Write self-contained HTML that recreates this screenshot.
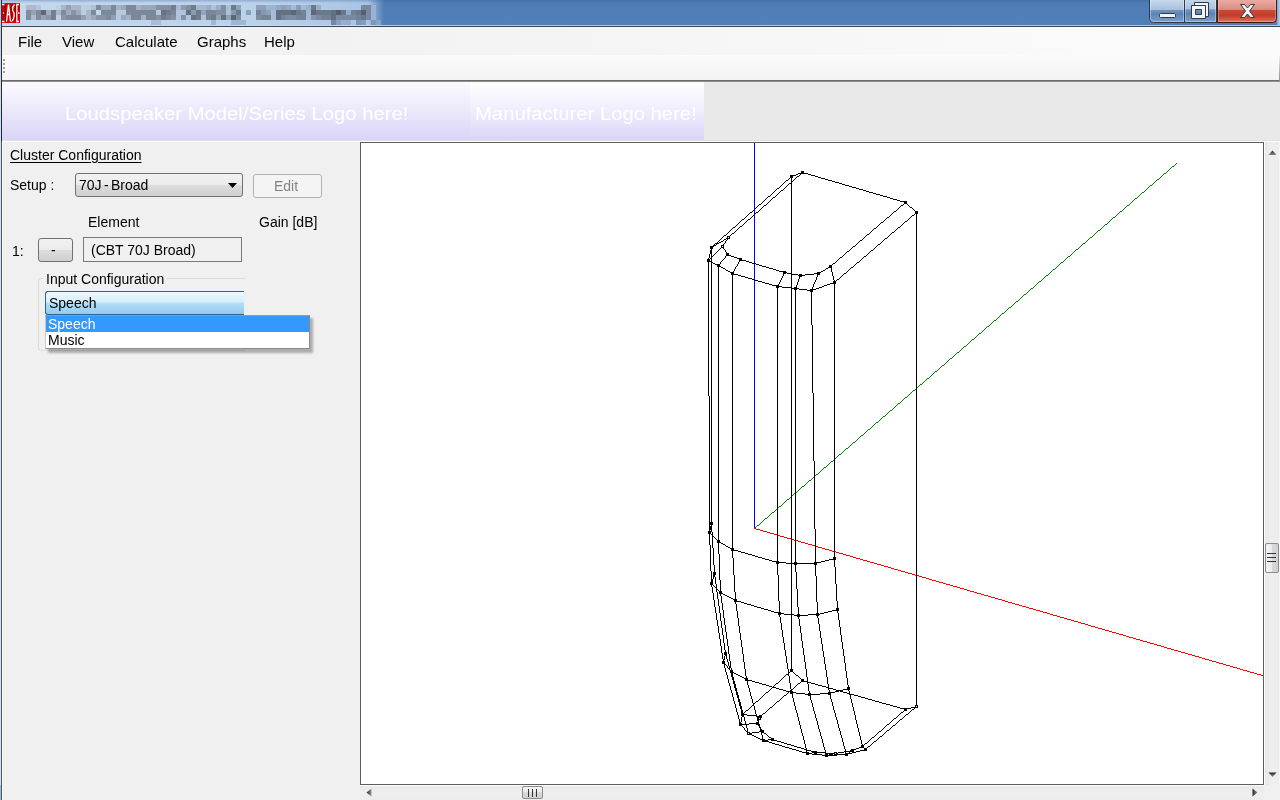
<!DOCTYPE html>
<html><head><meta charset="utf-8">
<style>
*{margin:0;padding:0;box-sizing:border-box}
html,body{width:1280px;height:800px;overflow:hidden;background:#f0f0f0;font-family:"Liberation Sans",sans-serif;position:relative}
.abs{position:absolute}
#title{left:0;top:0;width:1280px;height:26px;background:linear-gradient(#4b79b2,#507eb6 40%,#5080b8 90%)}
#glow{left:0;top:0;width:400px;height:26px;background:linear-gradient(to right,#c4d8ee 0,#bcd2ea 250px,#a9c4e3 368px,rgba(80,126,182,0) 384px)}
#tops{left:0;top:0;width:1280px;height:3px;background:linear-gradient(rgba(60,100,160,.35),rgba(60,100,160,0))}
#tbot{left:0;top:25px;width:1280px;height:1px;background:rgba(205,222,242,.75)}
#tline{left:0;top:26px;width:1280px;height:1px;background:#3a4a5e}
#blocks i{position:absolute;width:5px;height:5px;display:block}
#icon{left:2px;top:3px;width:18px;height:20px;background:#d80f0f;overflow:hidden}
#icon span{position:absolute;left:0;top:1px;width:18px;font-family:"Liberation Sans",sans-serif;font-size:17px;line-height:17px;color:#fff;transform:scaleX(.55);transform-origin:0 0;white-space:nowrap;letter-spacing:-0.5px}
#lborder{left:1px;top:0;width:1px;height:800px;background:linear-gradient(#2a3646 0,#1e2632 140px,#4a5868 142px,#4a5868 100%)}
#lborder0{left:0;top:0;width:1px;height:800px;background:linear-gradient(#c4c0cc 0,#cddff2 120px,#cddff2 785px,#a4bad2 785px)}
#lhl{left:2px;top:141px;width:1px;height:659px;background:#f8f8f8}
#btns{left:1149px;top:0;width:128px;height:22px;border:1px solid #3b4a5e;border-top:none;border-radius:0 0 5px 5px;overflow:hidden}
#bmin{left:0;top:0;width:35px;height:21px;background:linear-gradient(#c3d5ea 0,#b6cbe3 45%,#7b9dc6 50%,#5d86ba 75%,#7ba0cc 100%);border-right:1px solid #3b4a5e}
#bmax{left:35px;top:0;width:32px;height:21px;background:linear-gradient(#c3d5ea 0,#b6cbe3 45%,#7b9dc6 50%,#5d86ba 75%,#7ba0cc 100%);border-right:1px solid #5a2020}
#bcls{left:67px;top:0;width:61px;height:21px;background:linear-gradient(#eaaaa0 0,#e3968b 45%,#cc5443 50%,#c43d2b 75%,#d77263 100%)}
#menubar{left:2px;top:27px;width:1278px;height:28px;background:linear-gradient(to right,#f0f0f0 0,#f3f3f3 450px,#f8f8f8 900px,#fbfbfb 1278px)}
.menu{position:absolute;top:33px;font-size:15px;color:#000;line-height:18px;will-change:transform}
#toolbar{left:2px;top:55px;width:1278px;height:25px;background:linear-gradient(#fbfbfb,#f3f3f3)}
.grip{position:absolute;left:3px;width:2px;height:2px;background:#a0a0a0}
#tbline{left:2px;top:80px;width:1278px;height:2px;background:linear-gradient(#5a5a5a,#a0a0a0)}
#banner{left:2px;top:82px;width:702px;height:58px;background:linear-gradient(to right,rgba(0,0,0,0) 468px,#dad5f8 468px),linear-gradient(#fbfaff 0,#ebe8fb 50%,#d9d4f8 100%)}
#banner2{left:470px;top:82px;width:234px;height:58px;background:linear-gradient(#ffffff 0,#efedfc 50%,#dad5f8 100%)}
#rest{left:704px;top:82px;width:576px;height:59px;background:#e9e9e9}
#vline{left:360px;top:141px;width:920px;height:1px;background:#fafafa}
.btext{position:absolute;color:#fff;font-size:18px;line-height:20px;top:104px;transform:scaleX(1.125);transform-origin:0 0;white-space:nowrap;font-family:"Liberation Sans",sans-serif}
#vp{left:360px;top:142px;width:904px;height:643px;background:#fff;border:1px solid #5e5e5e}
.lbl{position:absolute;font-size:14px;color:#000;line-height:16px;white-space:nowrap;will-change:transform}

.combo{position:absolute;border:1px solid #707070;border-radius:3px;background:linear-gradient(#f2f2f2 0,#ebebeb 48%,#dddddd 52%,#cfcfcf 100%)}
.btn{position:absolute;border:1px solid #707070;border-radius:3px;background:linear-gradient(#f2f2f2 0,#ebebeb 48%,#dddddd 52%,#cfcfcf 100%)}
.tbox{position:absolute;border:1px solid #7a7a7a;background:#f0f0f0}
.sb{position:absolute;background:#ececec}
</style></head><body>
<div id="title" class="abs"></div>
<div id="glow" class="abs"></div>
<div id="tops" class="abs"></div>
<div id="tbot" class="abs"></div>
<div id="blocks" class="abs" style="left:0;top:0"><i style="left:26px;top:5px;background:rgb(173, 186, 203)"></i><i style="left:31px;top:5px;background:rgb(172, 186, 203)"></i><i style="left:36px;top:5px;background:rgb(183, 196, 214)"></i><i style="left:56px;top:5px;background:rgb(191, 206, 225)"></i><i style="left:61px;top:5px;background:rgb(169, 183, 201)"></i><i style="left:66px;top:5px;background:rgb(148, 161, 178)"></i><i style="left:71px;top:5px;background:rgb(168, 183, 201)"></i><i style="left:76px;top:5px;background:rgb(168, 182, 201)"></i><i style="left:81px;top:5px;background:rgb(189, 204, 223)"></i><i style="left:86px;top:5px;background:rgb(188, 204, 223)"></i><i style="left:91px;top:5px;background:rgb(176, 192, 212)"></i><i style="left:96px;top:5px;background:rgb(125, 138, 154)"></i><i style="left:101px;top:5px;background:rgb(155, 170, 189)"></i><i style="left:106px;top:5px;background:rgb(155, 170, 188)"></i><i style="left:111px;top:5px;background:rgb(124, 137, 154)"></i><i style="left:116px;top:5px;background:rgb(164, 180, 200)"></i><i style="left:121px;top:5px;background:rgb(154, 168, 188)"></i><i style="left:126px;top:5px;background:rgb(124, 137, 153)"></i><i style="left:131px;top:5px;background:rgb(123, 136, 153)"></i><i style="left:136px;top:5px;background:rgb(163, 178, 199)"></i><i style="left:141px;top:5px;background:rgb(152, 167, 188)"></i><i style="left:146px;top:5px;background:rgb(151, 167, 188)"></i><i style="left:151px;top:5px;background:rgb(151, 167, 187)"></i><i style="left:156px;top:5px;background:rgb(132, 146, 164)"></i><i style="left:161px;top:5px;background:rgb(131, 146, 164)"></i><i style="left:166px;top:5px;background:rgb(131, 145, 164)"></i><i style="left:171px;top:5px;background:rgb(112, 125, 142)"></i><i style="left:176px;top:5px;background:rgb(167, 186, 209)"></i><i style="left:181px;top:5px;background:rgb(140, 155, 175)"></i><i style="left:186px;top:5px;background:rgb(130, 144, 164)"></i><i style="left:191px;top:5px;background:rgb(111, 124, 141)"></i><i style="left:196px;top:5px;background:rgb(166, 184, 208)"></i><i style="left:201px;top:5px;background:rgb(165, 184, 208)"></i><i style="left:206px;top:5px;background:rgb(155, 174, 197)"></i><i style="left:211px;top:5px;background:rgb(173, 193, 219)"></i><i style="left:216px;top:5px;background:rgb(155, 173, 196)"></i><i style="left:221px;top:5px;background:rgb(128, 143, 163)"></i><i style="left:226px;top:5px;background:rgb(171, 192, 218)"></i><i style="left:231px;top:5px;background:rgb(110, 123, 141)"></i><i style="left:236px;top:5px;background:rgb(144, 162, 184)"></i><i style="left:256px;top:5px;background:rgb(143, 161, 184)"></i><i style="left:261px;top:5px;background:rgb(142, 161, 184)"></i><i style="left:266px;top:5px;background:rgb(158, 179, 205)"></i><i style="left:271px;top:5px;background:rgb(158, 179, 205)"></i><i style="left:276px;top:5px;background:rgb(149, 169, 195)"></i><i style="left:281px;top:5px;background:rgb(140, 160, 183)"></i><i style="left:286px;top:5px;background:rgb(148, 168, 194)"></i><i style="left:291px;top:5px;background:rgb(163, 187, 215)"></i><i style="left:296px;top:5px;background:rgb(139, 158, 183)"></i><i style="left:301px;top:5px;background:rgb(162, 186, 214)"></i><i style="left:306px;top:5px;background:rgb(154, 176, 204)"></i><i style="left:311px;top:5px;background:rgb(107, 121, 140)"></i><i style="left:316px;top:5px;background:rgb(153, 175, 204)"></i><i style="left:361px;top:5px;background:rgb(119, 137, 160)"></i><i style="left:366px;top:5px;background:rgb(119, 137, 160)"></i><i style="left:371px;top:5px;background:rgb(154, 179, 212)"></i><i style="left:26px;top:10px;background:rgb(128, 140, 155)"></i><i style="left:31px;top:10px;background:rgb(150, 163, 179)"></i><i style="left:36px;top:10px;background:rgb(128, 139, 155)"></i><i style="left:41px;top:10px;background:rgb(95, 105, 120)"></i><i style="left:46px;top:10px;background:rgb(160, 173, 190)"></i><i style="left:51px;top:10px;background:rgb(116, 128, 143)"></i><i style="left:56px;top:10px;background:rgb(170, 183, 202)"></i><i style="left:61px;top:10px;background:rgb(127, 139, 155)"></i><i style="left:66px;top:10px;background:rgb(158, 172, 189)"></i><i style="left:71px;top:10px;background:rgb(137, 149, 166)"></i><i style="left:76px;top:10px;background:rgb(157, 171, 189)"></i><i style="left:81px;top:10px;background:rgb(189, 204, 223)"></i><i style="left:86px;top:10px;background:rgb(167, 182, 200)"></i><i style="left:91px;top:10px;background:rgb(125, 138, 154)"></i><i style="left:101px;top:10px;background:rgb(125, 137, 154)"></i><i style="left:106px;top:10px;background:rgb(124, 137, 154)"></i><i style="left:111px;top:10px;background:rgb(124, 137, 154)"></i><i style="left:116px;top:10px;background:rgb(184, 201, 223)"></i><i style="left:121px;top:10px;background:rgb(184, 200, 223)"></i><i style="left:126px;top:10px;background:rgb(124, 137, 153)"></i><i style="left:131px;top:10px;background:rgb(123, 136, 153)"></i><i style="left:136px;top:10px;background:rgb(123, 136, 153)"></i><i style="left:141px;top:10px;background:rgb(123, 136, 153)"></i><i style="left:146px;top:10px;background:rgb(123, 136, 153)"></i><i style="left:151px;top:10px;background:rgb(123, 136, 153)"></i><i style="left:156px;top:10px;background:rgb(179, 198, 221)"></i><i style="left:161px;top:10px;background:rgb(103, 115, 131)"></i><i style="left:166px;top:10px;background:rgb(112, 125, 142)"></i><i style="left:171px;top:10px;background:rgb(121, 135, 153)"></i><i style="left:176px;top:10px;background:rgb(177, 196, 220)"></i><i style="left:181px;top:10px;background:rgb(177, 196, 220)"></i><i style="left:186px;top:10px;background:rgb(102, 114, 130)"></i><i style="left:191px;top:10px;background:rgb(139, 155, 175)"></i><i style="left:196px;top:10px;background:rgb(111, 124, 141)"></i><i style="left:201px;top:10px;background:rgb(147, 164, 186)"></i><i style="left:206px;top:10px;background:rgb(120, 134, 152)"></i><i style="left:211px;top:10px;background:rgb(120, 134, 152)"></i><i style="left:216px;top:10px;background:rgb(128, 144, 163)"></i><i style="left:221px;top:10px;background:rgb(128, 143, 163)"></i><i style="left:226px;top:10px;background:rgb(171, 192, 218)"></i><i style="left:231px;top:10px;background:rgb(136, 152, 174)"></i><i style="left:236px;top:10px;background:rgb(110, 123, 141)"></i><i style="left:246px;top:10px;background:rgb(143, 161, 184)"></i><i style="left:256px;top:10px;background:rgb(117, 132, 151)"></i><i style="left:261px;top:10px;background:rgb(134, 151, 173)"></i><i style="left:266px;top:10px;background:rgb(141, 160, 184)"></i><i style="left:271px;top:10px;background:rgb(166, 189, 216)"></i><i style="left:276px;top:10px;background:rgb(100, 113, 130)"></i><i style="left:281px;top:10px;background:rgb(100, 113, 129)"></i><i style="left:286px;top:10px;background:rgb(100, 113, 129)"></i><i style="left:291px;top:10px;background:rgb(92, 103, 119)"></i><i style="left:296px;top:10px;background:rgb(108, 122, 140)"></i><i style="left:301px;top:10px;background:rgb(115, 131, 151)"></i><i style="left:306px;top:10px;background:rgb(161, 185, 214)"></i><i style="left:311px;top:10px;background:rgb(92, 103, 119)"></i><i style="left:316px;top:10px;background:rgb(107, 121, 140)"></i><i style="left:321px;top:10px;background:rgb(107, 121, 140)"></i><i style="left:326px;top:10px;background:rgb(107, 121, 140)"></i><i style="left:331px;top:10px;background:rgb(99, 112, 129)"></i><i style="left:336px;top:10px;background:rgb(84, 94, 108)"></i><i style="left:341px;top:10px;background:rgb(106, 120, 140)"></i><i style="left:346px;top:10px;background:rgb(149, 173, 202)"></i><i style="left:351px;top:10px;background:rgb(113, 129, 150)"></i><i style="left:356px;top:10px;background:rgb(106, 120, 139)"></i><i style="left:361px;top:10px;background:rgb(84, 94, 108)"></i><i style="left:366px;top:10px;background:rgb(119, 137, 160)"></i><i style="left:371px;top:10px;background:rgb(154, 179, 212)"></i><i style="left:26px;top:15px;background:rgb(128, 140, 155)"></i><i style="left:31px;top:15px;background:rgb(172, 186, 203)"></i><i style="left:36px;top:15px;background:rgb(128, 139, 155)"></i><i style="left:41px;top:15px;background:rgb(149, 162, 178)"></i><i style="left:46px;top:15px;background:rgb(138, 150, 167)"></i><i style="left:51px;top:15px;background:rgb(116, 128, 143)"></i><i style="left:56px;top:15px;background:rgb(191, 206, 225)"></i><i style="left:61px;top:15px;background:rgb(137, 150, 166)"></i><i style="left:66px;top:15px;background:rgb(127, 138, 155)"></i><i style="left:71px;top:15px;background:rgb(126, 138, 155)"></i><i style="left:76px;top:15px;background:rgb(126, 138, 155)"></i><i style="left:81px;top:15px;background:rgb(147, 160, 177)"></i><i style="left:86px;top:15px;background:rgb(167, 182, 200)"></i><i style="left:91px;top:15px;background:rgb(156, 170, 189)"></i><i style="left:96px;top:15px;background:rgb(135, 149, 166)"></i><i style="left:101px;top:15px;background:rgb(135, 148, 166)"></i><i style="left:106px;top:15px;background:rgb(124, 137, 154)"></i><i style="left:111px;top:15px;background:rgb(145, 158, 177)"></i><i style="left:116px;top:15px;background:rgb(184, 201, 223)"></i><i style="left:121px;top:15px;background:rgb(154, 168, 188)"></i><i style="left:126px;top:15px;background:rgb(163, 179, 199)"></i><i style="left:131px;top:15px;background:rgb(123, 136, 153)"></i><i style="left:136px;top:15px;background:rgb(123, 136, 153)"></i><i style="left:141px;top:15px;background:rgb(162, 178, 199)"></i><i style="left:146px;top:15px;background:rgb(123, 136, 153)"></i><i style="left:151px;top:15px;background:rgb(123, 136, 153)"></i><i style="left:156px;top:15px;background:rgb(132, 146, 164)"></i><i style="left:161px;top:15px;background:rgb(112, 125, 142)"></i><i style="left:166px;top:15px;background:rgb(122, 135, 153)"></i><i style="left:171px;top:15px;background:rgb(131, 145, 164)"></i><i style="left:176px;top:15px;background:rgb(177, 196, 220)"></i><i style="left:181px;top:15px;background:rgb(130, 145, 164)"></i><i style="left:186px;top:15px;background:rgb(176, 195, 220)"></i><i style="left:191px;top:15px;background:rgb(102, 114, 130)"></i><i style="left:196px;top:15px;background:rgb(111, 124, 141)"></i><i style="left:201px;top:15px;background:rgb(174, 194, 219)"></i><i style="left:206px;top:15px;background:rgb(120, 134, 152)"></i><i style="left:211px;top:15px;background:rgb(111, 124, 141)"></i><i style="left:216px;top:15px;background:rgb(146, 163, 185)"></i><i style="left:221px;top:15px;background:rgb(101, 114, 130)"></i><i style="left:226px;top:15px;background:rgb(145, 163, 185)"></i><i style="left:231px;top:15px;background:rgb(93, 104, 119)"></i><i style="left:236px;top:15px;background:rgb(127, 143, 163)"></i><i style="left:256px;top:15px;background:rgb(126, 142, 162)"></i><i style="left:261px;top:15px;background:rgb(117, 132, 151)"></i><i style="left:266px;top:15px;background:rgb(117, 132, 151)"></i><i style="left:271px;top:15px;background:rgb(166, 189, 216)"></i><i style="left:276px;top:15px;background:rgb(100, 113, 130)"></i><i style="left:281px;top:15px;background:rgb(116, 131, 151)"></i><i style="left:286px;top:15px;background:rgb(124, 140, 162)"></i><i style="left:291px;top:15px;background:rgb(124, 140, 162)"></i><i style="left:296px;top:15px;background:rgb(116, 131, 151)"></i><i style="left:301px;top:15px;background:rgb(115, 131, 151)"></i><i style="left:306px;top:15px;background:rgb(161, 185, 214)"></i><i style="left:311px;top:15px;background:rgb(130, 149, 172)"></i><i style="left:316px;top:15px;background:rgb(122, 139, 161)"></i><i style="left:321px;top:15px;background:rgb(114, 130, 151)"></i><i style="left:326px;top:15px;background:rgb(114, 130, 150)"></i><i style="left:331px;top:15px;background:rgb(99, 112, 129)"></i><i style="left:336px;top:15px;background:rgb(121, 139, 161)"></i><i style="left:341px;top:15px;background:rgb(121, 138, 161)"></i><i style="left:346px;top:15px;background:rgb(120, 138, 160)"></i><i style="left:351px;top:15px;background:rgb(120, 138, 160)"></i><i style="left:356px;top:15px;background:rgb(113, 129, 150)"></i><i style="left:361px;top:15px;background:rgb(105, 120, 139)"></i><i style="left:366px;top:15px;background:rgb(119, 137, 160)"></i><i style="left:371px;top:15px;background:rgb(154, 179, 212)"></i><i style="left:151px;top:20px;background:rgb(168, 189, 216)"></i><i style="left:156px;top:20px;background:rgb(167, 189, 216)"></i><i style="left:211px;top:20px;background:rgb(161, 184, 214)"></i><i style="left:231px;top:20px;background:rgb(159, 183, 213)"></i><i style="left:236px;top:20px;background:rgb(159, 182, 213)"></i><i style="left:241px;top:20px;background:rgb(159, 182, 213)"></i><i style="left:331px;top:20px;background:rgb(117, 135, 159)"></i><i style="left:336px;top:20px;background:rgb(136, 159, 189)"></i><i style="left:341px;top:20px;background:rgb(149, 175, 210)"></i><i style="left:346px;top:20px;background:rgb(148, 175, 209)"></i><i style="left:356px;top:20px;background:rgb(128, 150, 179)"></i><i style="left:361px;top:20px;background:rgb(133, 158, 189)"></i><i style="left:371px;top:20px;background:rgb(127, 149, 178)"></i><i style="left:376px;top:20px;background:rgb(139, 164, 198)"></i></div>
<svg class="abs" style="left:2px;top:3px" width="18" height="20" viewBox="0 0 18 20"><rect width="18" height="20" fill="#d40000"/>
<g fill="none" stroke="#fff" stroke-width="1.3">
<path d="M0 1.5H2.5M0 18.5H2.5"/><path d="M1 10h1" stroke-width="1.5"/>
<path d="M4.5 18.5L6.5 1.5L8.5 18.5M5.3 11.5H7.7"/>
<path d="M12.5 1.5Q10 4 10.5 7Q12.5 10 12.2 13Q11.5 17 9.5 18.5"/>
<path d="M17 1.5H14.8V18.5H17M16 10h1.5"/>
</g><g stroke="#300" stroke-width="0.8" opacity=".6" fill="none"><path d="M3.2 2V18M9.3 3V18M13.6 3V17"/></g></svg>
<svg class="abs" style="left:1149px;top:0" width="129" height="24">
<defs>
<linearGradient id="bb" x1="0" y1="0" x2="0" y2="1"><stop offset="0" stop-color="#c6d8ec"/><stop offset=".42" stop-color="#a9c2df"/><stop offset=".46" stop-color="#6f95c2"/><stop offset=".62" stop-color="#5984b8"/><stop offset="1" stop-color="#7ea2cd"/></linearGradient>
<linearGradient id="br" x1="0" y1="0" x2="0" y2="1"><stop offset="0" stop-color="#eaaaa2"/><stop offset=".42" stop-color="#dc8c80"/><stop offset=".46" stop-color="#c84a36"/><stop offset=".7" stop-color="#c43c28"/><stop offset="1" stop-color="#d97a68"/></linearGradient>
</defs>
<path d="M0.5 0V18.5Q0.5 22.5 4.5 22.5H35.5V0Z" fill="url(#bb)"/><path d="M0.5 0V18.5Q0.5 22.5 4.5 22.5H35.5V0" fill="none" stroke="#2c3a4c"/>
<path d="M1.5 0V18.5Q1.5 21.5 4.5 21.5H34.5V0" fill="none" stroke="rgba(255,255,255,.35)"/>
<rect x="35.5" y="-1" width="32" height="23.5" fill="url(#bb)" stroke="#2c3a4c"/>
<path d="M36.5 0V21.5H66.5V0" fill="none" stroke="rgba(255,255,255,.35)"/>
<path d="M68.5 0V22.5H123.5Q127.5 22.5 127.5 18.5V0Z" fill="url(#br)"/><path d="M68.5 0V22.5H123.5Q127.5 22.5 127.5 18.5V0" fill="none" stroke="#4a1408"/>
<path d="M69.5 0V21.5H123.5Q126.5 21.5 126.5 18.5V0" fill="none" stroke="rgba(255,220,210,.35)"/>
<rect x="10.5" y="13.5" width="16" height="4" rx="1" fill="#f4f4f4" stroke="#2e3a4e"/>
<path d="M45.5 2.5H59.5V16.5H56.5V5.5H45.5Z" fill="#f4f4f4" stroke="#2e3a4e" stroke-linejoin="round"/>
<path d="M42.5 5.5H56.5V18.5H42.5ZM46.5 9.5V14.5H52.5V9.5Z" fill="#f4f4f4" stroke="#2e3a4e" fill-rule="evenodd"/>
<path d="M91.5 4.5H95.5L98.5 8L101.5 4.5H105.5L100.5 11L105.5 17.5H101.5L98.5 14L95.5 17.5H91.5L96.5 11Z" fill="#f6f6f6" stroke="#2e3a4e" stroke-linejoin="round"/>
</svg>
</div>
<div class="abs" style="left:1277px;top:0;width:3px;height:25px;background:linear-gradient(to right,#7ea6d6,#b4d0ee)"></div><div id="tline" class="abs"></div>
<div id="menubar" class="abs"></div>
<div class="menu" style="left:18px">File</div>
<div class="menu" style="left:62px">View</div>
<div class="menu" style="left:115px">Calculate</div>
<div class="menu" style="left:197px">Graphs</div>
<div class="menu" style="left:264px">Help</div>
<div id="toolbar" class="abs"></div>
<div class="grip" style="top:59px"></div><div class="grip" style="top:63px"></div><div class="grip" style="top:67px"></div><div class="grip" style="top:71px"></div>
<div id="tbline" class="abs"></div><div class="abs" style="left:1279px;top:56px;width:1px;height:25px;background:linear-gradient(#f0f0f0,#8a8a8a)"></div>
<div id="banner" class="abs"></div><div id="banner2" class="abs"></div>
<div id="rest" class="abs"></div>
<div class="btext" style="left:65px">Loudspeaker Model/Series Logo here!</div>
<div class="btext" style="left:475px">Manufacturer Logo here!</div>
<div class="abs" style="left:2px;top:140px;width:1278px;height:1px;background:#e2e2e2"></div><div class="abs" style="left:2px;top:141px;width:1278px;height:1px;background:#fdfdfd"></div>
<div id="vp" class="abs"></div>
<div class="lbl" style="left:10px;top:147px;text-decoration:underline;text-underline-offset:2px">Cluster Configuration</div>
<div class="lbl" style="left:10px;top:177px">Setup :</div>
<div class="lbl" style="left:88px;top:214px">Element</div>
<div class="lbl" style="left:259px;top:214px">Gain [dB]</div>
<div class="lbl" style="left:12px;top:243px">1:</div>

<div class="combo" style="left:75px;top:173px;width:168px;height:24px"></div>
<div class="lbl" style="left:79px;top:177px;word-spacing:-1.5px">70J - Broad</div>
<svg class="abs" style="left:228px;top:183px" width="10" height="6"><path d="M0 0H9L4.5 5Z" fill="#000"/></svg>
<div class="btn" style="left:253px;top:174px;width:69px;height:24px;border-color:#adb2b5;background:#f4f4f4"></div>
<div class="lbl" style="left:274px;top:178px;color:#838383">Edit</div>
<div class="btn" style="left:38px;top:238px;width:35px;height:24px"></div>
<div class="lbl" style="left:51px;top:242px">-</div>
<div class="tbox" style="left:83px;top:237px;width:159px;height:25px"></div>
<div class="lbl" style="left:91px;top:242px">(CBT 70J Broad)</div>
<div class="abs" style="left:38px;top:278px;width:207px;height:73px;border:1px solid #dcdcdc;border-right:none;border-radius:3px 0 0 3px"></div>
<div class="abs" style="left:43px;top:272px;width:124px;height:14px;background:#f0f0f0"></div>
<div class="lbl" style="left:46px;top:271px">Input Configuration</div>
<div class="abs" style="left:45px;top:291px;width:199px;height:24px;border:1px solid #2c6494;border-right:none;border-radius:3px 0 0 3px;background:linear-gradient(#eef8fe 0,#d6eefb 45%,#b2def6 52%,#94cbec 100%)"></div>
<div class="lbl" style="left:49px;top:295px">Speech</div>
<div class="abs" style="left:48px;top:318px;width:265px;height:35px;background:rgba(0,0,0,.28);filter:blur(1.2px)"></div>
<div class="abs" style="left:45px;top:315px;width:265px;height:34px;background:#fff;border:1px solid #8a8a8a;border-left-color:#c8c8c8;border-top-color:#9a9a9a"></div>
<div class="abs" style="left:46px;top:316px;width:263px;height:16px;background:#3399ff"></div>
<div class="lbl" style="left:48px;top:316px;color:#fff">Speech</div>
<div class="lbl" style="left:48px;top:332px">Music</div>

<div class="sb" style="left:1264px;top:142px;width:16px;height:643px;background:linear-gradient(to right,#fdfdfd 0,#fdfdfd 1px,#e8e8e8 1px,#efefef 8px,#ececec 15px,#f6f6f6 15px)"></div>
<svg class="abs" style="left:1268px;top:150px" width="9" height="6"><defs><linearGradient id="ga" x1="0" y1="0" x2="0" y2="1"><stop offset="0" stop-color="#222"/><stop offset="1" stop-color="#888"/></linearGradient></defs><path d="M4.5 0.5L8.5 5H0.5Z" fill="url(#ga)"/></svg>
<svg class="abs" style="left:1268px;top:772px" width="9" height="6"><defs><linearGradient id="gb" x1="0" y1="0" x2="0" y2="1"><stop offset="0" stop-color="#222"/><stop offset="1" stop-color="#999"/></linearGradient></defs><path d="M0.5 0.5H8.5L4.5 5Z" fill="url(#gb)"/></svg>
<div class="abs" style="left:1265px;top:543px;width:14px;height:30px;border:1px solid #8b8b8b;border-radius:2px;background:linear-gradient(to right,#f4f4f4 0,#eaeaea 50%,#d9d9db 50%,#cfd0d3 100%)"></div>
<div class="abs" style="left:1267px;top:553px;width:9px;height:1px;background:#333"></div>
<div class="abs" style="left:1267px;top:557px;width:9px;height:1px;background:#333"></div>
<div class="abs" style="left:1267px;top:561px;width:9px;height:1px;background:#333"></div>
<div class="sb" style="left:360px;top:785px;width:904px;height:15px;background:linear-gradient(#fdfdfd 0,#fdfdfd 1px,#e9e9e9 1px,#efefef 8px,#ececec 14px)"></div>
<div class="sb" style="left:1264px;top:785px;width:16px;height:15px;background:#f0f0f0"></div>
<svg class="abs" style="left:366px;top:788px" width="7" height="10"><defs><linearGradient id="gc" x1="0" y1="0" x2="1" y2="0"><stop offset="0" stop-color="#222"/><stop offset="1" stop-color="#999"/></linearGradient></defs><path d="M0.5 4.5L5.5 0.5V8.5Z" fill="url(#gc)"/></svg>
<svg class="abs" style="left:1252px;top:788px" width="7" height="10"><defs><linearGradient id="gd" x1="0" y1="0" x2="1" y2="0"><stop offset="0" stop-color="#222"/><stop offset="1" stop-color="#999"/></linearGradient></defs><path d="M0.5 0.5L5.5 4.5L0.5 8.5Z" fill="url(#gd)"/></svg>
<div class="abs" style="left:522px;top:786px;width:21px;height:13px;border:1px solid #8b8b8b;border-radius:2px;background:linear-gradient(#f4f4f4 0,#eaeaea 50%,#d9d9db 50%,#cfd0d3 100%)"></div>
<div class="abs" style="left:528px;top:789px;width:1px;height:8px;background:#333"></div>
<div class="abs" style="left:532px;top:789px;width:1px;height:8px;background:#333"></div>
<div class="abs" style="left:536px;top:789px;width:1px;height:8px;background:#333"></div>
<svg class="abs" style="left:0;top:0" width="1280" height="800" shape-rendering="crispEdges"><path d="M754 143h1v386h-1z" fill="#0000ff"/><path d="M1172 166h2v1h-2zM1164 173h2v1h-2zM1157 179h2v1h-2zM1150 185h2v1h-2zM1142 192h2v1h-2zM1135 198h2v1h-2zM1127 205h2v1h-2zM1120 211h2v1h-2zM1113 217h2v1h-2zM1105 224h2v1h-2zM1098 230h2v1h-2zM1090 237h2v1h-2zM1083 243h2v1h-2zM1076 249h2v1h-2zM1068 256h2v1h-2zM1061 262h2v1h-2zM1053 269h2v1h-2zM1046 275h2v1h-2zM1039 281h2v1h-2zM1031 288h2v1h-2zM1024 294h2v1h-2zM1016 301h2v1h-2zM1009 307h2v1h-2zM1002 313h2v1h-2zM994 320h2v1h-2zM987 326h2v1h-2zM979 333h2v1h-2zM972 339h2v1h-2zM964 346h2v1h-2zM957 352h2v1h-2zM950 358h2v1h-2zM942 365h2v1h-2zM935 371h2v1h-2zM927 378h2v1h-2zM920 384h2v1h-2zM913 390h2v1h-2zM905 397h2v1h-2zM898 403h2v1h-2zM890 410h2v1h-2zM883 416h2v1h-2zM876 422h2v1h-2zM868 429h2v1h-2zM861 435h2v1h-2zM853 442h2v1h-2zM846 448h2v1h-2zM839 454h2v1h-2zM831 461h2v1h-2zM824 467h2v1h-2zM816 474h2v1h-2zM809 480h2v1h-2zM802 486h2v1h-2zM794 493h2v1h-2zM787 499h2v1h-2zM779 506h2v1h-2zM772 512h2v1h-2zM765 518h2v1h-2zM757 525h2v1h-2zM1176 163h1v1h-1zM1175 164h1v1h-1zM1174 165h1v1h-1zM1171 167h1v1h-1zM1170 168h1v1h-1zM1169 169h1v1h-1zM1168 170h1v1h-1zM1167 171h1v1h-1zM1166 172h1v1h-1zM1163 174h1v1h-1zM1162 175h1v1h-1zM1161 176h1v1h-1zM1160 177h1v1h-1zM1159 178h1v1h-1zM1156 180h1v1h-1zM1155 181h1v1h-1zM1154 182h1v1h-1zM1153 183h1v1h-1zM1152 184h1v1h-1zM1149 186h1v1h-1zM1148 187h1v1h-1zM1147 188h1v1h-1zM1146 189h1v1h-1zM1145 190h1v1h-1zM1144 191h1v1h-1zM1141 193h1v1h-1zM1140 194h1v1h-1zM1139 195h1v1h-1zM1138 196h1v1h-1zM1137 197h1v1h-1zM1134 199h1v1h-1zM1133 200h1v1h-1zM1132 201h1v1h-1zM1131 202h1v1h-1zM1130 203h1v1h-1zM1129 204h1v1h-1zM1126 206h1v1h-1zM1125 207h1v1h-1zM1124 208h1v1h-1zM1123 209h1v1h-1zM1122 210h1v1h-1zM1119 212h1v1h-1zM1118 213h1v1h-1zM1117 214h1v1h-1zM1116 215h1v1h-1zM1115 216h1v1h-1zM1112 218h1v1h-1zM1111 219h1v1h-1zM1110 220h1v1h-1zM1109 221h1v1h-1zM1108 222h1v1h-1zM1107 223h1v1h-1zM1104 225h1v1h-1zM1103 226h1v1h-1zM1102 227h1v1h-1zM1101 228h1v1h-1zM1100 229h1v1h-1zM1097 231h1v1h-1zM1096 232h1v1h-1zM1095 233h1v1h-1zM1094 234h1v1h-1zM1093 235h1v1h-1zM1092 236h1v1h-1zM1089 238h1v1h-1zM1088 239h1v1h-1zM1087 240h1v1h-1zM1086 241h1v1h-1zM1085 242h1v1h-1zM1082 244h1v1h-1zM1081 245h1v1h-1zM1080 246h1v1h-1zM1079 247h1v1h-1zM1078 248h1v1h-1zM1075 250h1v1h-1zM1074 251h1v1h-1zM1073 252h1v1h-1zM1072 253h1v1h-1zM1071 254h1v1h-1zM1070 255h1v1h-1zM1067 257h1v1h-1zM1066 258h1v1h-1zM1065 259h1v1h-1zM1064 260h1v1h-1zM1063 261h1v1h-1zM1060 263h1v1h-1zM1059 264h1v1h-1zM1058 265h1v1h-1zM1057 266h1v1h-1zM1056 267h1v1h-1zM1055 268h1v1h-1zM1052 270h1v1h-1zM1051 271h1v1h-1zM1050 272h1v1h-1zM1049 273h1v1h-1zM1048 274h1v1h-1zM1045 276h1v1h-1zM1044 277h1v1h-1zM1043 278h1v1h-1zM1042 279h1v1h-1zM1041 280h1v1h-1zM1038 282h1v1h-1zM1037 283h1v1h-1zM1036 284h1v1h-1zM1035 285h1v1h-1zM1034 286h1v1h-1zM1033 287h1v1h-1zM1030 289h1v1h-1zM1029 290h1v1h-1zM1028 291h1v1h-1zM1027 292h1v1h-1zM1026 293h1v1h-1zM1023 295h1v1h-1zM1022 296h1v1h-1zM1021 297h1v1h-1zM1020 298h1v1h-1zM1019 299h1v1h-1zM1018 300h1v1h-1zM1015 302h1v1h-1zM1014 303h1v1h-1zM1013 304h1v1h-1zM1012 305h1v1h-1zM1011 306h1v1h-1zM1008 308h1v1h-1zM1007 309h1v1h-1zM1006 310h1v1h-1zM1005 311h1v1h-1zM1004 312h1v1h-1zM1001 314h1v1h-1zM1000 315h1v1h-1zM999 316h1v1h-1zM998 317h1v1h-1zM997 318h1v1h-1zM996 319h1v1h-1zM993 321h1v1h-1zM992 322h1v1h-1zM991 323h1v1h-1zM990 324h1v1h-1zM989 325h1v1h-1zM986 327h1v1h-1zM985 328h1v1h-1zM984 329h1v1h-1zM983 330h1v1h-1zM982 331h1v1h-1zM981 332h1v1h-1zM978 334h1v1h-1zM977 335h1v1h-1zM976 336h1v1h-1zM975 337h1v1h-1zM974 338h1v1h-1zM971 340h1v1h-1zM970 341h1v1h-1zM969 342h1v1h-1zM968 343h1v1h-1zM967 344h1v1h-1zM966 345h1v1h-1zM963 347h1v1h-1zM962 348h1v1h-1zM961 349h1v1h-1zM960 350h1v1h-1zM959 351h1v1h-1zM956 353h1v1h-1zM955 354h1v1h-1zM954 355h1v1h-1zM953 356h1v1h-1zM952 357h1v1h-1zM949 359h1v1h-1zM948 360h1v1h-1zM947 361h1v1h-1zM946 362h1v1h-1zM945 363h1v1h-1zM944 364h1v1h-1zM941 366h1v1h-1zM940 367h1v1h-1zM939 368h1v1h-1zM938 369h1v1h-1zM937 370h1v1h-1zM934 372h1v1h-1zM933 373h1v1h-1zM932 374h1v1h-1zM931 375h1v1h-1zM930 376h1v1h-1zM929 377h1v1h-1zM926 379h1v1h-1zM925 380h1v1h-1zM924 381h1v1h-1zM923 382h1v1h-1zM922 383h1v1h-1zM919 385h1v1h-1zM918 386h1v1h-1zM917 387h1v1h-1zM916 388h1v1h-1zM915 389h1v1h-1zM912 391h1v1h-1zM911 392h1v1h-1zM910 393h1v1h-1zM909 394h1v1h-1zM908 395h1v1h-1zM907 396h1v1h-1zM904 398h1v1h-1zM903 399h1v1h-1zM902 400h1v1h-1zM901 401h1v1h-1zM900 402h1v1h-1zM897 404h1v1h-1zM896 405h1v1h-1zM895 406h1v1h-1zM894 407h1v1h-1zM893 408h1v1h-1zM892 409h1v1h-1zM889 411h1v1h-1zM888 412h1v1h-1zM887 413h1v1h-1zM886 414h1v1h-1zM885 415h1v1h-1zM882 417h1v1h-1zM881 418h1v1h-1zM880 419h1v1h-1zM879 420h1v1h-1zM878 421h1v1h-1zM875 423h1v1h-1zM874 424h1v1h-1zM873 425h1v1h-1zM872 426h1v1h-1zM871 427h1v1h-1zM870 428h1v1h-1zM867 430h1v1h-1zM866 431h1v1h-1zM865 432h1v1h-1zM864 433h1v1h-1zM863 434h1v1h-1zM860 436h1v1h-1zM859 437h1v1h-1zM858 438h1v1h-1zM857 439h1v1h-1zM856 440h1v1h-1zM855 441h1v1h-1zM852 443h1v1h-1zM851 444h1v1h-1zM850 445h1v1h-1zM849 446h1v1h-1zM848 447h1v1h-1zM845 449h1v1h-1zM844 450h1v1h-1zM843 451h1v1h-1zM842 452h1v1h-1zM841 453h1v1h-1zM838 455h1v1h-1zM837 456h1v1h-1zM836 457h1v1h-1zM835 458h1v1h-1zM834 459h1v1h-1zM833 460h1v1h-1zM830 462h1v1h-1zM829 463h1v1h-1zM828 464h1v1h-1zM827 465h1v1h-1zM826 466h1v1h-1zM823 468h1v1h-1zM822 469h1v1h-1zM821 470h1v1h-1zM820 471h1v1h-1zM819 472h1v1h-1zM818 473h1v1h-1zM815 475h1v1h-1zM814 476h1v1h-1zM813 477h1v1h-1zM812 478h1v1h-1zM811 479h1v1h-1zM808 481h1v1h-1zM807 482h1v1h-1zM806 483h1v1h-1zM805 484h1v1h-1zM804 485h1v1h-1zM801 487h1v1h-1zM800 488h1v1h-1zM799 489h1v1h-1zM798 490h1v1h-1zM797 491h1v1h-1zM796 492h1v1h-1zM793 494h1v1h-1zM792 495h1v1h-1zM791 496h1v1h-1zM790 497h1v1h-1zM789 498h1v1h-1zM786 500h1v1h-1zM785 501h1v1h-1zM784 502h1v1h-1zM783 503h1v1h-1zM782 504h1v1h-1zM781 505h1v1h-1zM778 507h1v1h-1zM777 508h1v1h-1zM776 509h1v1h-1zM775 510h1v1h-1zM774 511h1v1h-1zM771 513h1v1h-1zM770 514h1v1h-1zM769 515h1v1h-1zM768 516h1v1h-1zM767 517h1v1h-1zM764 519h1v1h-1zM763 520h1v1h-1zM762 521h1v1h-1zM761 522h1v1h-1zM760 523h1v1h-1zM759 524h1v1h-1zM756 526h1v1h-1zM755 527h1v1h-1zM754 528h1v1h-1z" fill="#008000"/><path d="M754 528h2v1h-2zM756 529h4v1h-4zM760 530h3v1h-3zM763 531h4v1h-4zM767 532h3v1h-3zM770 533h4v1h-4zM774 534h3v1h-3zM777 535h3v1h-3zM780 536h4v1h-4zM784 537h3v1h-3zM787 538h4v1h-4zM791 539h3v1h-3zM794 540h4v1h-4zM798 541h3v1h-3zM801 542h4v1h-4zM805 543h3v1h-3zM808 544h4v1h-4zM812 545h3v1h-3zM815 546h3v1h-3zM818 547h4v1h-4zM822 548h3v1h-3zM825 549h4v1h-4zM829 550h3v1h-3zM832 551h4v1h-4zM836 552h3v1h-3zM839 553h4v1h-4zM843 554h3v1h-3zM846 555h4v1h-4zM850 556h3v1h-3zM853 557h3v1h-3zM856 558h4v1h-4zM860 559h3v1h-3zM863 560h4v1h-4zM867 561h3v1h-3zM870 562h4v1h-4zM874 563h3v1h-3zM877 564h4v1h-4zM881 565h3v1h-3zM884 566h4v1h-4zM888 567h3v1h-3zM891 568h3v1h-3zM894 569h4v1h-4zM898 570h3v1h-3zM901 571h4v1h-4zM905 572h3v1h-3zM908 573h4v1h-4zM912 574h3v1h-3zM915 575h4v1h-4zM919 576h3v1h-3zM922 577h4v1h-4zM926 578h3v1h-3zM929 579h3v1h-3zM932 580h4v1h-4zM936 581h3v1h-3zM939 582h4v1h-4zM943 583h3v1h-3zM946 584h4v1h-4zM950 585h3v1h-3zM953 586h4v1h-4zM957 587h3v1h-3zM960 588h4v1h-4zM964 589h3v1h-3zM967 590h3v1h-3zM970 591h4v1h-4zM974 592h3v1h-3zM977 593h4v1h-4zM981 594h3v1h-3zM984 595h4v1h-4zM988 596h3v1h-3zM991 597h4v1h-4zM995 598h3v1h-3zM998 599h4v1h-4zM1002 600h3v1h-3zM1005 601h3v1h-3zM1008 602h4v1h-4zM1012 603h3v1h-3zM1015 604h4v1h-4zM1019 605h3v1h-3zM1022 606h4v1h-4zM1026 607h3v1h-3zM1029 608h4v1h-4zM1033 609h3v1h-3zM1036 610h4v1h-4zM1040 611h3v1h-3zM1043 612h4v1h-4zM1047 613h3v1h-3zM1050 614h3v1h-3zM1053 615h4v1h-4zM1057 616h3v1h-3zM1060 617h4v1h-4zM1064 618h3v1h-3zM1067 619h4v1h-4zM1071 620h3v1h-3zM1074 621h4v1h-4zM1078 622h3v1h-3zM1081 623h4v1h-4zM1085 624h3v1h-3zM1088 625h3v1h-3zM1091 626h4v1h-4zM1095 627h3v1h-3zM1098 628h4v1h-4zM1102 629h3v1h-3zM1105 630h4v1h-4zM1109 631h3v1h-3zM1112 632h4v1h-4zM1116 633h3v1h-3zM1119 634h4v1h-4zM1123 635h3v1h-3zM1126 636h3v1h-3zM1129 637h4v1h-4zM1133 638h3v1h-3zM1136 639h4v1h-4zM1140 640h3v1h-3zM1143 641h4v1h-4zM1147 642h3v1h-3zM1150 643h4v1h-4zM1154 644h3v1h-3zM1157 645h4v1h-4zM1161 646h3v1h-3zM1164 647h3v1h-3zM1167 648h4v1h-4zM1171 649h3v1h-3zM1174 650h4v1h-4zM1178 651h3v1h-3zM1181 652h4v1h-4zM1185 653h3v1h-3zM1188 654h4v1h-4zM1192 655h3v1h-3zM1195 656h4v1h-4zM1199 657h3v1h-3zM1202 658h3v1h-3zM1205 659h4v1h-4zM1209 660h3v1h-3zM1212 661h4v1h-4zM1216 662h3v1h-3zM1219 663h4v1h-4zM1223 664h3v1h-3zM1226 665h4v1h-4zM1230 666h3v1h-3zM1233 667h4v1h-4zM1237 668h3v1h-3zM1240 669h3v1h-3zM1243 670h4v1h-4zM1247 671h3v1h-3zM1250 672h4v1h-4zM1254 673h3v1h-3zM1257 674h4v1h-4zM1261 675h2v1h-2z" fill="#ff0000"/><path fill="#000" d="M801 172h3v1h-3zM798 173h4v1h-4zM804 173h4v1h-4zM796 174h2v1h-2zM808 174h3v1h-3zM793 175h3v1h-3zM811 175h4v1h-4zM791 176h2v1h-2zM797 176h2v1h-2zM815 176h3v1h-3zM790 177h2v1h-2zM818 177h3v1h-3zM821 178h4v1h-4zM825 179h3v1h-3zM786 180h2v1h-2zM828 180h4v1h-4zM791 181h2v1h-2zM832 181h3v1h-3zM835 182h4v1h-4zM789 183h3v1h-3zM839 183h3v1h-3zM842 184h3v1h-3zM845 185h4v1h-4zM849 186h3v1h-3zM852 187h4v1h-4zM777 188h2v1h-2zM856 188h3v1h-3zM859 189h4v1h-4zM781 190h2v1h-2zM863 190h3v1h-3zM866 191h3v1h-3zM869 192h4v1h-4zM873 193h3v1h-3zM876 194h4v1h-4zM880 195h3v1h-3zM768 196h2v1h-2zM883 196h4v1h-4zM773 197h2v1h-2zM887 197h3v1h-3zM890 198h3v1h-3zM893 199h4v1h-4zM897 200h3v1h-3zM900 201h4v1h-4zM904 202h2v1h-2zM759 204h2v1h-2zM764 205h2v1h-2zM901 205h2v1h-2zM910 207h2v1h-2zM894 211h2v1h-2zM750 212h2v1h-2zM756 212h2v1h-2zM915 213h2v1h-2zM912 215h2v1h-2zM887 217h2v1h-2zM742 219h2v1h-2zM748 219h2v1h-2zM905 221h2v1h-2zM881 222h2v1h-2zM740 226h2v1h-2zM733 227h2v1h-2zM898 227h2v1h-2zM874 228h2v1h-2zM892 232h2v1h-2zM732 233h2v1h-2zM867 234h2v1h-2zM724 235h2v1h-2zM726 238h2v1h-2zM885 238h2v1h-2zM724 239h2v1h-2zM860 240h2v1h-2zM721 241h2v1h-2zM719 242h2v1h-2zM715 243h4v1h-4zM878 244h2v1h-2zM713 245h3v1h-3zM712 246h2v1h-2zM853 246h2v1h-2zM710 250h2v1h-2zM871 250h2v1h-2zM710 251h2v1h-2zM847 251h2v1h-2zM710 252h2v1h-2zM710 253h2v1h-2zM727 254h2v1h-2zM729 255h2v1h-2zM711 256h2v1h-2zM731 256h3v1h-3zM864 256h2v1h-2zM734 257h3v1h-3zM840 257h2v1h-2zM710 258h2v1h-2zM737 258h2v1h-2zM708 259h2v1h-2zM739 259h3v1h-3zM742 260h4v1h-4zM708 261h4v1h-4zM746 261h3v1h-3zM711 262h2v1h-2zM749 262h3v1h-3zM857 262h2v1h-2zM713 263h2v1h-2zM752 263h4v1h-4zM833 263h2v1h-2zM715 264h2v1h-2zM756 264h3v1h-3zM717 265h2v1h-2zM759 265h3v1h-3zM718 266h3v1h-3zM762 266h4v1h-4zM721 267h2v1h-2zM766 267h3v1h-3zM828 267h3v1h-3zM851 267h2v1h-2zM723 268h2v1h-2zM769 268h4v1h-4zM826 268h2v1h-2zM773 269h3v1h-3zM726 270h2v1h-2zM776 270h3v1h-3zM823 270h2v1h-2zM728 271h2v1h-2zM779 271h4v1h-4zM821 271h2v1h-2zM730 272h2v1h-2zM783 272h4v1h-4zM819 272h2v1h-2zM732 273h2v1h-2zM787 273h5v1h-5zM814 273h5v1h-5zM844 273h2v1h-2zM734 274h4v1h-4zM791 274h7v1h-7zM805 274h9v1h-9zM738 275h3v1h-3zM798 275h7v1h-7zM741 276h4v1h-4zM745 277h3v1h-3zM748 278h4v1h-4zM752 279h3v1h-3zM837 279h2v1h-2zM755 280h3v1h-3zM758 281h4v1h-4zM834 281h2v1h-2zM762 282h3v1h-3zM833 282h2v1h-2zM765 283h4v1h-4zM830 283h3v1h-3zM769 284h3v1h-3zM827 284h3v1h-3zM772 285h4v1h-4zM824 285h3v1h-3zM776 286h6v1h-6zM822 286h2v1h-2zM782 287h10v1h-10zM819 287h3v1h-3zM791 288h8v1h-8zM816 288h3v1h-3zM799 289h8v1h-8zM813 289h3v1h-3zM807 290h6v1h-6zM709 526h3v1h-3zM709 527h3v1h-3zM709 528h3v1h-3zM709 529h3v1h-3zM709 533h2v1h-2zM711 534h2v1h-2zM712 536h2v1h-2zM717 540h2v1h-2zM718 542h3v1h-3zM721 543h2v1h-2zM723 544h2v1h-2zM726 546h2v1h-2zM728 547h2v1h-2zM730 548h3v1h-3zM732 549h2v1h-2zM734 550h4v1h-4zM738 551h3v1h-3zM741 552h4v1h-4zM745 553h3v1h-3zM748 554h4v1h-4zM752 555h3v1h-3zM755 556h3v1h-3zM758 557h4v1h-4zM762 558h3v1h-3zM833 558h2v1h-2zM765 559h4v1h-4zM829 559h4v1h-4zM769 560h3v1h-3zM825 560h4v1h-4zM772 561h4v1h-4zM821 561h4v1h-4zM776 562h10v1h-10zM817 562h4v1h-4zM786 563h31v1h-31zM713 575h2v1h-2zM713 576h2v1h-2zM711 579h2v1h-2zM711 580h2v1h-2zM711 581h2v1h-2zM711 584h2v1h-2zM715 587h2v1h-2zM716 589h2v1h-2zM719 591h2v1h-2zM720 593h3v1h-3zM723 594h2v1h-2zM725 595h2v1h-2zM727 596h2v1h-2zM729 597h2v1h-2zM731 598h2v1h-2zM733 599h3v1h-3zM735 600h2v1h-2zM737 601h4v1h-4zM741 602h3v1h-3zM744 603h3v1h-3zM747 604h4v1h-4zM751 605h3v1h-3zM754 606h3v1h-3zM757 607h4v1h-4zM761 608h3v1h-3zM764 609h4v1h-4zM836 609h2v1h-2zM768 610h3v1h-3zM832 610h4v1h-4zM771 611h3v1h-3zM828 611h4v1h-4zM774 612h4v1h-4zM824 612h4v1h-4zM778 613h6v1h-6zM820 613h4v1h-4zM784 614h10v1h-10zM808 614h12v1h-12zM794 615h14v1h-14zM725 655h2v1h-2zM723 659h2v1h-2zM723 663h2v1h-2zM724 664h2v1h-2zM729 666h2v1h-2zM729 667h2v1h-2zM728 668h2v1h-2zM730 670h2v1h-2zM730 671h2v1h-2zM730 672h4v1h-4zM788 672h2v1h-2zM731 673h2v1h-2zM734 673h2v1h-2zM731 674h2v1h-2zM736 674h2v1h-2zM786 674h3v1h-3zM731 675h2v1h-2zM738 675h2v1h-2zM796 675h2v1h-2zM731 676h2v1h-2zM740 676h2v1h-2zM732 677h2v1h-2zM742 677h2v1h-2zM732 678h2v1h-2zM744 678h3v1h-3zM732 679h2v1h-2zM746 679h2v1h-2zM748 680h4v1h-4zM802 680h2v1h-2zM733 681h2v1h-2zM752 681h3v1h-3zM804 681h4v1h-4zM733 682h2v1h-2zM755 682h4v1h-4zM807 682h4v1h-4zM733 683h2v1h-2zM759 683h3v1h-3zM776 683h2v1h-2zM798 683h2v1h-2zM811 683h4v1h-4zM734 684h2v1h-2zM762 684h4v1h-4zM815 684h3v1h-3zM734 685h2v1h-2zM766 685h3v1h-3zM818 685h4v1h-4zM734 686h2v1h-2zM769 686h3v1h-3zM822 686h4v1h-4zM734 687h2v1h-2zM772 687h4v1h-4zM826 687h3v1h-3zM735 688h2v1h-2zM776 688h3v1h-3zM828 688h5v1h-5zM847 688h2v1h-2zM735 689h2v1h-2zM779 689h4v1h-4zM791 689h2v1h-2zM833 689h3v1h-3zM843 689h4v1h-4zM735 690h2v1h-2zM783 690h3v1h-3zM790 690h2v1h-2zM836 690h7v1h-7zM786 691h4v1h-4zM835 691h4v1h-4zM840 691h3v1h-3zM736 692h2v1h-2zM766 692h2v1h-2zM790 692h6v1h-6zM831 692h4v1h-4zM843 692h4v1h-4zM736 693h2v1h-2zM796 693h9v1h-9zM820 693h11v1h-11zM847 693h3v1h-3zM736 694h2v1h-2zM805 694h15v1h-15zM849 694h5v1h-5zM737 695h2v1h-2zM784 695h2v1h-2zM854 695h4v1h-4zM737 696h2v1h-2zM858 696h3v1h-3zM737 697h2v1h-2zM861 697h4v1h-4zM865 698h3v1h-3zM738 699h2v1h-2zM868 699h4v1h-4zM738 700h2v1h-2zM872 700h3v1h-3zM738 701h2v1h-2zM756 701h2v1h-2zM777 701h2v1h-2zM875 701h4v1h-4zM739 702h2v1h-2zM879 702h3v1h-3zM739 703h2v1h-2zM753 703h2v1h-2zM882 703h4v1h-4zM739 704h2v1h-2zM886 704h4v1h-4zM739 705h2v1h-2zM752 705h2v1h-2zM890 705h3v1h-3zM740 706h2v1h-2zM893 706h4v1h-4zM915 706h2v1h-2zM740 707h2v1h-2zM770 707h2v1h-2zM897 707h3v1h-3zM911 707h5v1h-5zM740 708h2v1h-2zM900 708h4v1h-4zM907 708h4v1h-4zM904 709h3v1h-3zM912 709h2v1h-2zM741 710h2v1h-2zM746 710h2v1h-2zM741 711h2v1h-2zM741 712h2v1h-2zM901 712h2v1h-2zM742 713h2v1h-2zM763 713h2v1h-2zM742 714h5v1h-5zM906 714h2v1h-2zM742 715h2v1h-2zM747 715h10v1h-10zM742 716h2v1h-2zM756 716h5v1h-5zM894 718h2v1h-2zM900 719h2v1h-2zM757 720h2v1h-2zM739 722h2v1h-2zM757 722h2v1h-2zM749 723h10v1h-10zM740 724h9v1h-9zM758 724h2v1h-2zM887 724h2v1h-2zM758 725h2v1h-2zM893 725h2v1h-2zM759 727h2v1h-2zM760 729h2v1h-2zM760 730h2v1h-2zM887 730h2v1h-2zM746 731h2v1h-2zM759 731h4v1h-4zM879 731h2v1h-2zM747 732h2v1h-2zM752 732h7v1h-7zM748 733h4v1h-4zM764 733h2v1h-2zM750 734h2v1h-2zM752 735h2v1h-2zM754 736h2v1h-2zM880 736h2v1h-2zM756 737h2v1h-2zM769 737h2v1h-2zM872 737h2v1h-2zM758 738h2v1h-2zM760 739h2v1h-2zM768 739h6v1h-6zM762 740h6v1h-6zM774 740h3v1h-3zM765 741h4v1h-4zM777 741h4v1h-4zM874 741h2v1h-2zM769 742h3v1h-3zM781 742h3v1h-3zM772 743h3v1h-3zM784 743h3v1h-3zM865 743h2v1h-2zM775 744h4v1h-4zM787 744h4v1h-4zM779 745h3v1h-3zM791 745h3v1h-3zM862 745h2v1h-2zM782 746h3v1h-3zM794 746h3v1h-3zM861 746h2v1h-2zM868 746h2v1h-2zM785 747h4v1h-4zM797 747h4v1h-4zM859 747h2v1h-2zM789 748h3v1h-3zM801 748h3v1h-3zM856 748h3v1h-3zM792 749h4v1h-4zM804 749h3v1h-3zM854 749h2v1h-2zM864 749h2v1h-2zM796 750h3v1h-3zM806 750h5v1h-5zM850 750h4v1h-4zM860 750h4v1h-4zM799 751h3v1h-3zM811 751h3v1h-3zM844 751h8v1h-8zM856 751h4v1h-4zM802 752h4v1h-4zM812 752h14v1h-14zM838 752h6v1h-6zM852 752h4v1h-4zM806 753h6v1h-6zM825 753h13v1h-13zM846 753h6v1h-6zM812 754h10v1h-10zM829 754h4v1h-4zM837 754h11v1h-11zM822 755h15v1h-15zM800 174h1v1h-1zM800 276h1v1h-1zM800 626h1v7h-1zM800 678h1v1h-1zM800 682h1v1h-1zM800 725h1v4h-1zM799 175h1v1h-1zM799 277h1v2h-1zM799 619h1v7h-1zM799 677h1v1h-1zM799 721h1v4h-1zM796 177h1v1h-1zM796 285h1v2h-1zM796 572h1v17h-1zM796 685h1v1h-1zM796 710h1v3h-1zM789 178h1v1h-1zM789 676h1v7h-1zM791 178h1v3h-1zM791 182h1v1h-1zM791 184h1v89h-1zM791 275h1v12h-1zM791 289h1v274h-1zM791 564h1v50h-1zM791 615h1v56h-1zM791 691h1v1h-1zM791 693h1v1h-1zM795 178h1v1h-1zM795 287h1v1h-1zM795 289h1v274h-1zM795 564h1v8h-1zM795 674h1v1h-1zM795 686h1v1h-1zM795 706h1v4h-1zM788 179h1v1h-1zM788 184h1v1h-1zM788 669h1v3h-1zM788 673h1v1h-1zM788 675h1v1h-1zM788 692h1v1h-1zM794 179h1v1h-1zM794 673h1v1h-1zM794 687h1v1h-1zM794 702h1v4h-1zM793 180h1v1h-1zM793 672h1v1h-1zM793 688h1v1h-1zM793 698h1v4h-1zM785 181h1v1h-1zM785 187h1v1h-1zM785 650h1v6h-1zM785 675h1v1h-1zM784 182h1v1h-1zM784 188h1v1h-1zM784 273h1v1h-1zM784 643h1v7h-1zM784 676h1v1h-1zM783 183h1v1h-1zM783 189h1v1h-1zM783 274h1v2h-1zM783 637h1v6h-1zM783 677h1v1h-1zM783 696h1v1h-1zM782 184h1v1h-1zM782 276h1v2h-1zM782 630h1v7h-1zM782 678h1v1h-1zM782 697h1v1h-1zM781 185h1v1h-1zM781 278h1v2h-1zM781 623h1v7h-1zM781 679h1v1h-1zM781 698h1v1h-1zM787 185h1v1h-1zM787 663h1v6h-1zM787 693h1v1h-1zM780 186h1v1h-1zM780 191h1v1h-1zM780 280h1v2h-1zM780 617h1v6h-1zM780 680h1v1h-1zM780 699h1v1h-1zM786 186h1v1h-1zM786 656h1v7h-1zM786 694h1v1h-1zM779 187h1v1h-1zM779 192h1v1h-1zM779 282h1v2h-1zM779 601h1v12h-1zM779 614h1v3h-1zM779 681h1v1h-1zM779 700h1v1h-1zM776 189h1v1h-1zM776 195h1v1h-1zM776 702h1v1h-1zM775 190h1v1h-1zM775 196h1v1h-1zM775 684h1v1h-1zM775 703h1v1h-1zM774 191h1v1h-1zM774 685h1v1h-1zM774 704h1v1h-1zM773 192h1v1h-1zM773 686h1v1h-1zM773 705h1v1h-1zM772 193h1v1h-1zM772 198h1v1h-1zM772 706h1v1h-1zM778 193h1v1h-1zM778 284h1v2h-1zM778 575h1v26h-1zM778 682h1v1h-1zM771 194h1v1h-1zM771 199h1v1h-1zM771 688h1v1h-1zM771 738h1v1h-1zM777 194h1v1h-1zM777 287h1v275h-1zM777 563h1v12h-1zM770 195h1v1h-1zM770 200h1v1h-1zM770 689h1v1h-1zM767 197h1v1h-1zM767 203h1v1h-1zM767 710h1v1h-1zM767 735h1v1h-1zM766 198h1v1h-1zM766 204h1v1h-1zM766 711h1v1h-1zM766 734h1v1h-1zM765 199h1v1h-1zM765 693h1v1h-1zM765 712h1v1h-1zM764 200h1v1h-1zM764 694h1v1h-1zM763 201h1v1h-1zM763 206h1v1h-1zM763 695h1v1h-1zM763 732h1v1h-1zM763 739h1v1h-1zM769 201h1v1h-1zM769 690h1v1h-1zM769 708h1v1h-1zM762 202h1v1h-1zM762 207h1v1h-1zM762 696h1v1h-1zM762 714h1v1h-1zM762 735h1v4h-1zM768 202h1v1h-1zM768 691h1v1h-1zM768 709h1v1h-1zM768 736h1v1h-1zM761 203h1v1h-1zM761 208h1v1h-1zM761 697h1v1h-1zM761 715h1v1h-1zM761 732h1v3h-1zM904 203h1v1h-1zM904 222h1v1h-1zM904 710h1v1h-1zM904 716h1v1h-1zM906 203h1v1h-1zM903 204h1v1h-1zM903 223h1v1h-1zM903 711h1v1h-1zM903 717h1v1h-1zM907 204h1v1h-1zM907 220h1v1h-1zM758 205h1v1h-1zM758 211h1v1h-1zM758 700h1v1h-1zM758 721h1v1h-1zM908 205h1v1h-1zM908 219h1v1h-1zM908 713h1v1h-1zM757 206h1v1h-1zM757 717h1v3h-1zM900 206h1v1h-1zM900 226h1v1h-1zM900 713h1v1h-1zM909 206h1v1h-1zM909 218h1v1h-1zM909 712h1v1h-1zM756 207h1v1h-1zM756 714h1v1h-1zM899 207h1v1h-1zM899 714h1v1h-1zM899 720h1v1h-1zM755 208h1v1h-1zM755 213h1v1h-1zM755 702h1v1h-1zM755 710h1v4h-1zM898 208h1v1h-1zM898 715h1v1h-1zM898 721h1v1h-1zM912 208h1v1h-1zM754 209h1v1h-1zM754 214h1v1h-1zM754 706h1v4h-1zM760 209h1v1h-1zM760 698h1v1h-1zM760 717h1v1h-1zM760 728h1v1h-1zM897 209h1v1h-1zM897 228h1v1h-1zM897 716h1v1h-1zM897 722h1v1h-1zM913 209h1v1h-1zM753 210h1v1h-1zM753 215h1v1h-1zM753 704h1v1h-1zM759 210h1v1h-1zM759 699h1v1h-1zM759 718h1v2h-1zM759 726h1v1h-1zM896 210h1v1h-1zM896 229h1v1h-1zM896 717h1v1h-1zM896 723h1v1h-1zM914 210h1v1h-1zM914 214h1v1h-1zM914 708h1v1h-1zM752 211h1v1h-1zM752 216h1v1h-1zM752 699h1v4h-1zM915 211h1v1h-1zM893 212h1v1h-1zM893 719h1v1h-1zM916 212h1v1h-1zM916 214h1v492h-1zM749 213h1v1h-1zM749 688h1v4h-1zM749 708h1v1h-1zM892 213h1v1h-1zM892 720h1v1h-1zM892 726h1v1h-1zM748 214h1v1h-1zM748 685h1v3h-1zM748 709h1v1h-1zM891 214h1v1h-1zM891 233h1v1h-1zM891 721h1v1h-1zM891 727h1v1h-1zM747 215h1v1h-1zM747 220h1v1h-1zM747 681h1v4h-1zM747 728h1v3h-1zM890 215h1v1h-1zM890 234h1v1h-1zM890 722h1v1h-1zM890 728h1v1h-1zM746 216h1v1h-1zM746 221h1v1h-1zM746 676h1v2h-1zM746 680h1v1h-1zM746 725h1v3h-1zM889 216h1v1h-1zM889 235h1v1h-1zM889 723h1v1h-1zM889 729h1v1h-1zM911 216h1v1h-1zM911 710h1v1h-1zM745 217h1v1h-1zM745 222h1v1h-1zM745 669h1v7h-1zM745 711h1v1h-1zM745 721h1v3h-1zM745 730h1v1h-1zM751 217h1v1h-1zM751 696h1v3h-1zM751 706h1v1h-1zM910 217h1v1h-1zM910 711h1v1h-1zM744 218h1v1h-1zM744 223h1v1h-1zM744 662h1v7h-1zM744 712h1v1h-1zM744 717h1v4h-1zM744 728h1v2h-1zM750 218h1v1h-1zM750 692h1v4h-1zM750 707h1v1h-1zM886 218h1v1h-1zM886 725h1v1h-1zM886 731h1v1h-1zM885 219h1v1h-1zM885 726h1v1h-1zM885 732h1v1h-1zM741 220h1v1h-1zM741 640h1v7h-1zM741 709h1v1h-1zM741 717h1v5h-1zM741 725h1v1h-1zM884 220h1v1h-1zM884 239h1v1h-1zM884 727h1v1h-1zM884 733h1v1h-1zM740 221h1v1h-1zM740 633h1v7h-1zM740 723h1v1h-1zM883 221h1v1h-1zM883 240h1v1h-1zM883 728h1v1h-1zM883 734h1v1h-1zM739 222h1v1h-1zM739 227h1v1h-1zM739 260h1v2h-1zM739 626h1v7h-1zM739 719h1v3h-1zM738 223h1v1h-1zM738 228h1v1h-1zM738 262h1v2h-1zM738 618h1v8h-1zM738 698h1v1h-1zM738 715h1v4h-1zM880 223h1v1h-1zM880 243h1v1h-1zM737 224h1v1h-1zM737 229h1v1h-1zM737 264h1v2h-1zM737 611h1v7h-1zM737 712h1v3h-1zM743 224h1v1h-1zM743 654h1v8h-1zM743 727h1v1h-1zM879 224h1v1h-1zM879 737h1v1h-1zM902 224h1v1h-1zM902 718h1v1h-1zM736 225h1v1h-1zM736 230h1v1h-1zM736 266h1v1h-1zM736 604h1v7h-1zM736 691h1v1h-1zM736 708h1v4h-1zM742 225h1v1h-1zM742 647h1v7h-1zM742 726h1v1h-1zM878 225h1v1h-1zM878 732h1v1h-1zM878 738h1v1h-1zM901 225h1v1h-1zM735 226h1v1h-1zM735 231h1v1h-1zM735 267h1v2h-1zM735 592h1v7h-1zM735 601h1v3h-1zM735 704h1v4h-1zM877 226h1v1h-1zM877 245h1v1h-1zM877 733h1v1h-1zM877 739h1v1h-1zM876 227h1v1h-1zM876 246h1v1h-1zM876 734h1v1h-1zM876 740h1v1h-1zM732 228h1v1h-1zM732 274h1v274h-1zM732 550h1v8h-1zM732 693h1v4h-1zM731 229h1v1h-1zM731 234h1v1h-1zM731 668h1v2h-1zM731 690h1v3h-1zM873 229h1v1h-1zM873 249h1v1h-1zM873 742h1v1h-1zM730 230h1v1h-1zM730 235h1v1h-1zM730 661h1v5h-1zM730 686h1v4h-1zM872 230h1v1h-1zM872 743h1v1h-1zM895 230h1v1h-1zM895 724h1v1h-1zM729 231h1v1h-1zM729 236h1v1h-1zM729 654h1v7h-1zM729 669h1v1h-1zM729 683h1v3h-1zM871 231h1v1h-1zM871 738h1v1h-1zM871 744h1v1h-1zM894 231h1v1h-1zM728 232h1v1h-1zM728 237h1v1h-1zM728 646h1v8h-1zM728 662h1v4h-1zM728 679h1v4h-1zM734 232h1v1h-1zM734 269h1v2h-1zM734 575h1v17h-1zM734 701h1v3h-1zM870 232h1v1h-1zM870 251h1v1h-1zM870 739h1v1h-1zM870 745h1v1h-1zM727 233h1v1h-1zM727 239h1v1h-1zM727 639h1v7h-1zM727 659h1v3h-1zM727 666h1v2h-1zM727 675h1v4h-1zM869 233h1v1h-1zM869 252h1v1h-1zM869 740h1v1h-1zM726 234h1v1h-1zM726 240h1v1h-1zM726 252h1v2h-1zM726 255h1v1h-1zM726 632h1v7h-1zM726 656h1v3h-1zM726 665h1v1h-1zM726 672h1v3h-1zM866 235h1v1h-1zM866 255h1v1h-1zM866 748h1v1h-1zM723 236h1v1h-1zM723 240h1v1h-1zM723 244h1v2h-1zM723 247h1v2h-1zM723 259h1v1h-1zM723 610h1v8h-1zM723 635h1v8h-1zM723 660h1v3h-1zM865 236h1v1h-1zM888 236h1v1h-1zM722 237h1v1h-1zM722 246h1v1h-1zM722 260h1v1h-1zM722 603h1v7h-1zM722 628h1v7h-1zM722 653h1v6h-1zM864 237h1v1h-1zM864 744h1v1h-1zM864 748h1v1h-1zM887 237h1v1h-1zM721 238h1v1h-1zM721 247h1v1h-1zM721 261h1v1h-1zM721 596h1v7h-1zM721 621h1v7h-1zM721 646h1v7h-1zM863 238h1v1h-1zM863 257h1v1h-1zM863 747h1v1h-1zM720 239h1v1h-1zM720 248h1v1h-1zM720 262h1v2h-1zM720 580h1v11h-1zM720 592h1v1h-1zM720 594h1v2h-1zM720 613h1v8h-1zM720 639h1v7h-1zM862 239h1v1h-1zM862 258h1v1h-1zM862 744h1v1h-1zM719 240h1v1h-1zM719 249h1v1h-1zM719 264h1v1h-1zM719 554h1v26h-1zM719 606h1v7h-1zM719 633h1v6h-1zM718 241h1v1h-1zM718 250h1v1h-1zM718 267h1v273h-1zM718 541h1v1h-1zM718 543h1v11h-1zM718 590h1v1h-1zM718 599h1v7h-1zM718 626h1v7h-1zM725 241h1v2h-1zM725 250h1v2h-1zM725 256h1v2h-1zM725 269h1v1h-1zM725 545h1v1h-1zM725 625h1v7h-1zM725 650h1v5h-1zM725 668h1v4h-1zM859 241h1v1h-1zM859 261h1v1h-1zM859 732h1v4h-1zM882 241h1v1h-1zM882 729h1v1h-1zM882 735h1v1h-1zM717 242h1v1h-1zM717 251h1v1h-1zM717 592h1v7h-1zM717 620h1v6h-1zM858 242h1v1h-1zM858 728h1v4h-1zM881 242h1v1h-1zM881 730h1v1h-1zM724 243h1v1h-1zM724 249h1v1h-1zM724 258h1v1h-1zM724 618h1v7h-1zM724 643h1v7h-1zM724 656h1v3h-1zM724 665h1v3h-1zM857 243h1v1h-1zM857 724h1v4h-1zM714 244h1v1h-1zM714 254h1v1h-1zM714 537h1v1h-1zM714 565h1v10h-1zM714 586h1v1h-1zM714 600h1v7h-1zM716 244h1v1h-1zM716 252h1v1h-1zM716 539h1v1h-1zM716 584h1v3h-1zM716 588h1v1h-1zM716 590h1v2h-1zM716 613h1v7h-1zM856 244h1v1h-1zM856 263h1v1h-1zM856 720h1v4h-1zM855 245h1v1h-1zM855 264h1v1h-1zM855 715h1v5h-1zM711 247h1v3h-1zM711 254h1v2h-1zM711 257h1v1h-1zM711 259h1v2h-1zM711 263h1v263h-1zM711 530h1v2h-1zM711 571h1v8h-1zM711 582h1v2h-1zM711 585h1v2h-1zM852 247h1v1h-1zM852 703h1v4h-1zM875 247h1v1h-1zM875 735h1v1h-1zM851 248h1v1h-1zM851 699h1v4h-1zM874 248h1v1h-1zM874 736h1v1h-1zM850 249h1v1h-1zM850 268h1v1h-1zM850 695h1v4h-1zM849 250h1v1h-1zM849 269h1v1h-1zM849 691h1v2h-1zM849 752h1v1h-1zM846 252h1v1h-1zM846 272h1v1h-1zM846 671h1v7h-1zM715 253h1v1h-1zM715 538h1v1h-1zM715 577h1v7h-1zM715 607h1v6h-1zM845 253h1v1h-1zM845 663h1v8h-1zM845 749h1v2h-1zM845 752h1v1h-1zM868 253h1v1h-1zM868 741h1v1h-1zM709 254h1v4h-1zM709 396h1v130h-1zM709 530h1v3h-1zM709 534h1v11h-1zM844 254h1v1h-1zM844 656h1v7h-1zM844 746h1v3h-1zM867 254h1v1h-1zM867 742h1v1h-1zM867 747h1v1h-1zM713 255h1v1h-1zM713 548h1v17h-1zM713 577h1v2h-1zM713 585h1v1h-1zM713 593h1v7h-1zM843 255h1v1h-1zM843 274h1v1h-1zM843 649h1v7h-1zM843 742h1v4h-1zM842 256h1v1h-1zM842 275h1v1h-1zM842 642h1v7h-1zM842 738h1v4h-1zM708 258h1v1h-1zM708 260h1v1h-1zM708 262h1v134h-1zM839 258h1v1h-1zM839 278h1v1h-1zM839 620h1v7h-1zM839 728h1v3h-1zM838 259h1v1h-1zM838 613h1v7h-1zM838 724h1v4h-1zM861 259h1v1h-1zM861 740h1v4h-1zM837 260h1v1h-1zM837 601h1v8h-1zM837 610h1v3h-1zM837 720h1v4h-1zM860 260h1v1h-1zM860 736h1v4h-1zM836 261h1v1h-1zM836 280h1v1h-1zM836 584h1v17h-1zM836 717h1v3h-1zM835 262h1v1h-1zM835 567h1v17h-1zM835 713h1v4h-1zM832 264h1v1h-1zM832 272h1v4h-1zM832 702h1v4h-1zM831 265h1v1h-1zM831 268h1v4h-1zM831 699h1v3h-1zM854 265h1v1h-1zM854 711h1v4h-1zM830 266h1v1h-1zM830 695h1v4h-1zM853 266h1v1h-1zM853 707h1v4h-1zM825 269h1v1h-1zM825 664h1v6h-1zM825 750h1v2h-1zM848 270h1v1h-1zM848 685h1v3h-1zM848 689h1v2h-1zM733 271h1v2h-1zM733 558h1v17h-1zM733 680h1v1h-1zM733 697h1v4h-1zM847 271h1v1h-1zM847 678h1v7h-1zM818 274h1v1h-1zM818 618h1v6h-1zM818 725h1v4h-1zM817 275h1v2h-1zM817 602h1v12h-1zM817 615h1v3h-1zM817 721h1v4h-1zM833 276h1v4h-1zM833 706h1v4h-1zM841 276h1v1h-1zM841 635h1v7h-1zM841 735h1v3h-1zM816 277h1v3h-1zM816 576h1v26h-1zM816 718h1v3h-1zM840 277h1v1h-1zM840 627h1v8h-1zM840 731h1v4h-1zM798 279h1v3h-1zM798 607h1v8h-1zM798 616h1v3h-1zM798 676h1v1h-1zM798 717h1v4h-1zM815 280h1v2h-1zM815 529h1v34h-1zM815 564h1v12h-1zM815 714h1v4h-1zM834 280h1v1h-1zM834 283h1v275h-1zM834 559h1v8h-1zM834 710h1v3h-1zM797 282h1v3h-1zM797 589h1v18h-1zM797 684h1v1h-1zM797 713h1v4h-1zM814 282h1v2h-1zM814 461h1v68h-1zM814 711h1v3h-1zM813 284h1v3h-1zM813 393h1v68h-1zM813 707h1v4h-1zM812 287h1v2h-1zM812 325h1v68h-1zM812 703h1v4h-1zM811 289h1v1h-1zM811 291h1v34h-1zM811 700h1v3h-1zM712 532h1v2h-1zM712 535h1v1h-1zM712 537h1v11h-1zM712 587h1v6h-1zM710 545h1v26h-1zM819 624h1v7h-1zM819 729h1v3h-1zM820 631h1v7h-1zM820 732h1v4h-1zM801 633h1v8h-1zM801 679h1v1h-1zM801 681h1v1h-1zM801 729h1v4h-1zM821 638h1v6h-1zM821 736h1v3h-1zM802 641h1v7h-1zM802 733h1v3h-1zM822 644h1v7h-1zM822 739h1v4h-1zM803 648h1v7h-1zM803 736h1v4h-1zM823 651h1v6h-1zM823 743h1v4h-1zM804 655h1v7h-1zM804 740h1v4h-1zM824 657h1v7h-1zM824 747h1v3h-1zM805 662h1v7h-1zM805 744h1v4h-1zM806 669h1v8h-1zM806 748h1v1h-1zM806 751h1v1h-1zM826 670h1v7h-1zM826 754h1v1h-1zM790 671h1v1h-1zM790 683h1v6h-1zM792 671h1v1h-1zM792 694h1v4h-1zM807 677h1v4h-1zM807 683h1v1h-1zM807 752h1v1h-1zM827 677h1v7h-1zM808 684h1v7h-1zM828 684h1v3h-1zM828 689h1v1h-1zM829 690h1v3h-1zM829 694h1v1h-1zM809 691h1v3h-1zM809 695h1v1h-1zM810 696h1v4h-1zM905 715h1v1h-1z"/><g fill="#000"><rect x="790" y="175" width="3" height="3"/><rect x="801" y="171" width="3" height="3"/><rect x="904" y="201" width="3" height="3"/><rect x="915" y="211" width="3" height="3"/><rect x="710" y="246" width="3" height="3"/><rect x="707" y="259" width="3" height="3"/><rect x="721" y="245" width="3" height="3"/><rect x="727" y="236" width="3" height="3"/><rect x="726" y="253" width="3" height="3"/><rect x="739" y="258" width="3" height="3"/><rect x="717" y="264" width="3" height="3"/><rect x="731" y="272" width="3" height="3"/><rect x="783" y="271" width="3" height="3"/><rect x="776" y="285" width="3" height="3"/><rect x="799" y="274" width="3" height="3"/><rect x="794" y="287" width="3" height="3"/><rect x="817" y="272" width="3" height="3"/><rect x="810" y="289" width="3" height="3"/><rect x="829" y="265" width="3" height="3"/><rect x="833" y="281" width="3" height="3"/><rect x="710" y="522" width="3" height="3"/><rect x="708" y="531" width="3" height="3"/><rect x="717" y="540" width="3" height="3"/><rect x="731" y="548" width="3" height="3"/><rect x="776" y="561" width="3" height="3"/><rect x="794" y="562" width="3" height="3"/><rect x="814" y="562" width="3" height="3"/><rect x="833" y="557" width="3" height="3"/><rect x="713" y="572" width="3" height="3"/><rect x="710" y="582" width="3" height="3"/><rect x="719" y="591" width="3" height="3"/><rect x="734" y="599" width="3" height="3"/><rect x="778" y="612" width="3" height="3"/><rect x="797" y="614" width="3" height="3"/><rect x="816" y="613" width="3" height="3"/><rect x="836" y="608" width="3" height="3"/><rect x="724" y="652" width="3" height="3"/><rect x="722" y="661" width="3" height="3"/><rect x="730" y="670" width="3" height="3"/><rect x="745" y="678" width="3" height="3"/><rect x="790" y="691" width="3" height="3"/><rect x="808" y="693" width="3" height="3"/><rect x="828" y="692" width="3" height="3"/><rect x="847" y="687" width="3" height="3"/><rect x="790" y="669" width="3" height="3"/><rect x="801" y="679" width="3" height="3"/><rect x="904" y="708" width="3" height="3"/><rect x="915" y="705" width="3" height="3"/><rect x="741" y="713" width="3" height="3"/><rect x="759" y="715" width="3" height="3"/><rect x="739" y="723" width="3" height="3"/><rect x="756" y="722" width="3" height="3"/><rect x="747" y="732" width="3" height="3"/><rect x="761" y="730" width="3" height="3"/><rect x="762" y="739" width="3" height="3"/><rect x="771" y="738" width="3" height="3"/><rect x="806" y="752" width="3" height="3"/><rect x="814" y="751" width="3" height="3"/><rect x="825" y="754" width="3" height="3"/><rect x="834" y="752" width="3" height="3"/><rect x="845" y="753" width="3" height="3"/><rect x="851" y="749" width="3" height="3"/><rect x="861" y="745" width="3" height="3"/><rect x="864" y="748" width="3" height="3"/><rect x="721" y="245" width="3" height="3"/><rect x="722" y="246" width="1" height="1" fill="#fff"/><rect x="727" y="236" width="3" height="3"/><rect x="728" y="237" width="1" height="1" fill="#fff"/><rect x="747" y="732" width="3" height="3"/><rect x="748" y="733" width="1" height="1" fill="#fff"/><rect x="834" y="752" width="3" height="3"/><rect x="835" y="753" width="1" height="1" fill="#fff"/><rect x="915" y="705" width="3" height="3"/><rect x="916" y="706" width="1" height="1" fill="#fff"/><rect x="758" y="717" width="3" height="3"/><rect x="759" y="718" width="1" height="1" fill="#fff"/></g></svg>
<div id="lborder0" class="abs"></div>
<div id="lborder" class="abs"></div><div id="lhl" class="abs"></div>
</body></html>
